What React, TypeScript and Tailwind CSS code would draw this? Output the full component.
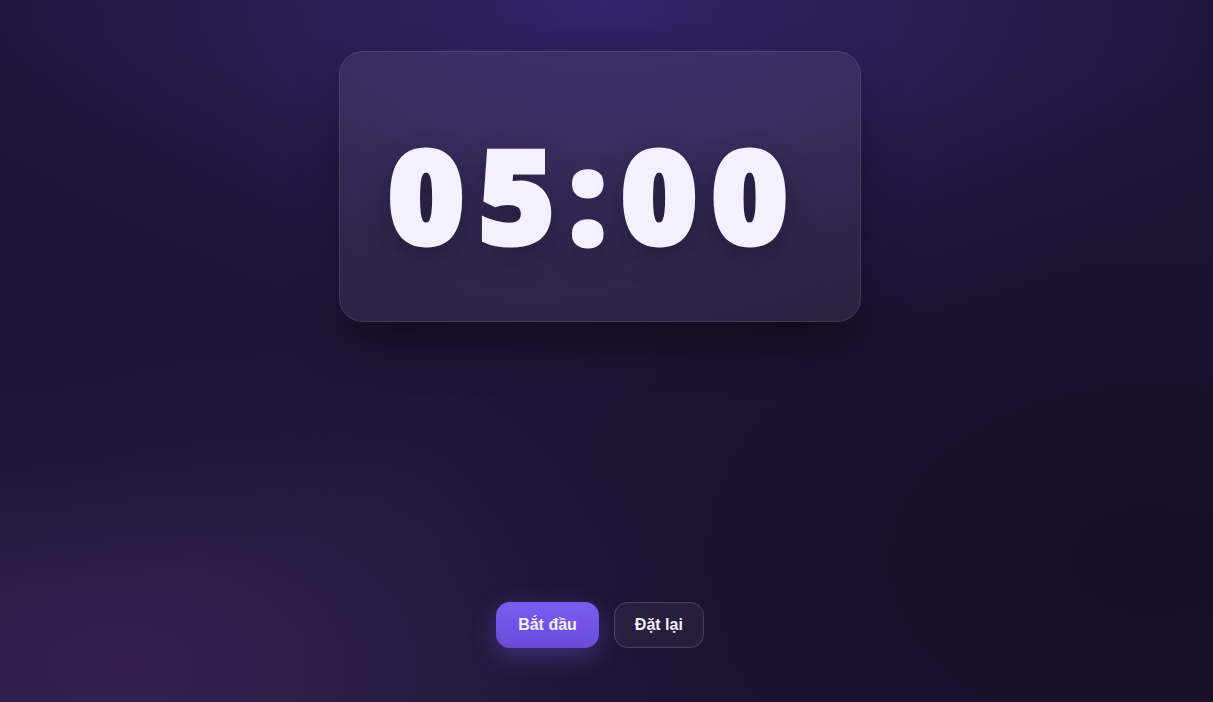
import React, { useState } from 'react';

const App: React.FC = () => {
  const [seconds] = useState(300);
  const mm = String(Math.floor(seconds / 60)).padStart(2, '0');
  const ss = String(seconds % 60).padStart(2, '0');

  return (
    <div className="relative h-[702px] w-full overflow-hidden bg-[#1d1434] font-['Liberation_Sans',Arial,sans-serif]">
      {/* background glows */}
      <div className="pointer-events-none absolute inset-0 bg-[radial-gradient(ellipse_60%_50%_at_50%_0%,#33236a_0%,rgba(51,35,106,0)_100%)]" />
      <div className="pointer-events-none absolute inset-0 bg-[radial-gradient(ellipse_50%_50%_at_10%_95%,#34214f_0%,rgba(52,33,79,0)_100%)]" />
      <div className="pointer-events-none absolute inset-0 bg-[radial-gradient(ellipse_60%_70%_at_95%_80%,#170e28_0%,rgba(23,14,40,0)_100%)]" />
      <div className="pointer-events-none absolute inset-0 bg-[radial-gradient(ellipse_40%_40%_at_0%_45%,#1c1333_0%,rgba(28,19,51,0)_100%)]" />

      <div className="relative flex h-full flex-col items-center justify-between pt-[51px] pr-[13px] pb-[54px]">
        {/* timer card */}
        <div className="flex h-[271px] w-[522px] items-center justify-center rounded-[24px] border border-white/10 bg-white/[0.07] shadow-[0_25px_50px_-12px_rgba(0,0,0,0.5)] backdrop-blur-xl">
          <span className="mr-[10px] pt-[14px] font-['Open_Sans',sans-serif] text-[130px] font-extrabold leading-none tracking-[0.11em] text-[#f3f0ff] [-webkit-text-stroke:5px_#f3f0ff] [text-shadow:0_10px_30px_rgba(0,0,0,0.35)]">
            {mm}:{ss}
          </span>
        </div>

        {/* controls */}
        <div className="flex items-center gap-[15px]">
          <button className="h-[46px] rounded-[14px] bg-gradient-to-b from-[#7b5cf2] to-[#6a4ad6] px-[22px] text-base font-bold text-[#f3f0ff] shadow-[0_8px_24px_rgba(124,92,242,0.35)]">
            Bắt đầu
          </button>
          <button className="h-[46px] rounded-[14px] border border-white/15 bg-white/[0.05] px-[20px] text-base font-bold text-[#f3f0ff]">
            Đặt lại
          </button>
        </div>
      </div>
    </div>
  );
};

export default App;
